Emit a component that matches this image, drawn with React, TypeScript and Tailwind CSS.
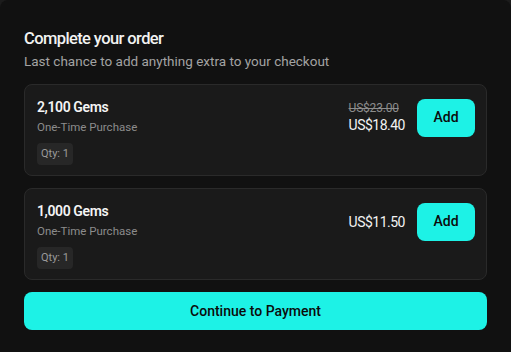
const items = [
  { id: 1, name: '2,100 Gems', oldPrice: 'US$23.00', price: 'US$18.40' },
  { id: 2, name: '1,000 Gems', oldPrice: null, price: 'US$11.50' },
];

function OfferCard({ name, oldPrice, price }: { name: string; oldPrice: string | null; price: string }) {
  return (
    <div className="flex justify-between rounded-lg border border-[#2a2a2a] bg-[#1a1a1a] pt-[12px] pb-[10px] pl-[12px] pr-[11px]">
      {/* Left: name, type, qty */}
      <div className="flex flex-col items-start">
        <div className="text-[14px] font-semibold leading-[20px] text-[#f4f4f4] tracking-[-0.4px]">{name}</div>
        <div className="mt-[2px] text-[11.5px] leading-[16px] text-[#8c8c8c]">One-Time Purchase</div>
        <div className="mt-[8px] flex h-[22px] items-center rounded-[4px] bg-[#272727] px-[4px] text-[11px] text-[#9a9a9a]">
          Qty: 1
        </div>
      </div>

      {/* Right: price + add */}
      <div className="flex h-[40px] items-center gap-[12px] pt-[1px]">
        <div className="flex flex-col items-start">
          {oldPrice && (
            <div className="text-[12px] leading-[15px] tracking-[-0.2px] text-[#8c8c8c] line-through">{oldPrice}</div>
          )}
          <div className="text-[14px] leading-[18px] tracking-[-0.5px] text-[#f2f2f2]">{price}</div>
        </div>
        <button className="flex h-[38px] w-[58px] items-center justify-center rounded-lg bg-[#1df2e6] text-[14px] font-medium text-[#0b0b0b]">
          Add
        </button>
      </div>
    </div>
  );
}

export default function App() {
  return (
    <div
      className="min-h-screen bg-[#1c1c1c]"
      style={{ fontFamily: 'Roboto, "Noto Sans", sans-serif' }}
    >
      <div className="flex h-[352px] w-[511px] flex-col rounded-t-lg bg-[#111111] px-[24px] pt-[27px]">
        {/* Header */}
        <h2 className="text-[16.5px] font-medium leading-[24px] tracking-[-0.6px] text-[#f2f2f2]">
          Complete your order
        </h2>
        <p className="mt-[1px] text-[13.5px] leading-[18px] text-[#a3a3a3]">
          Last chance to add anything extra to your checkout
        </p>

        {/* Offers */}
        <div className="mt-[14px] flex flex-col gap-[12px]">
          {items.map((item) => (
            <OfferCard key={item.id} name={item.name} oldPrice={item.oldPrice} price={item.price} />
          ))}
        </div>

        {/* Continue */}
        <button className="mt-[12px] flex h-[38px] items-center justify-center rounded-lg bg-[#1df2e6] text-[14px] font-medium text-[#0b0b0b]">
          Continue to Payment
        </button>
      </div>
    </div>
  );
}
